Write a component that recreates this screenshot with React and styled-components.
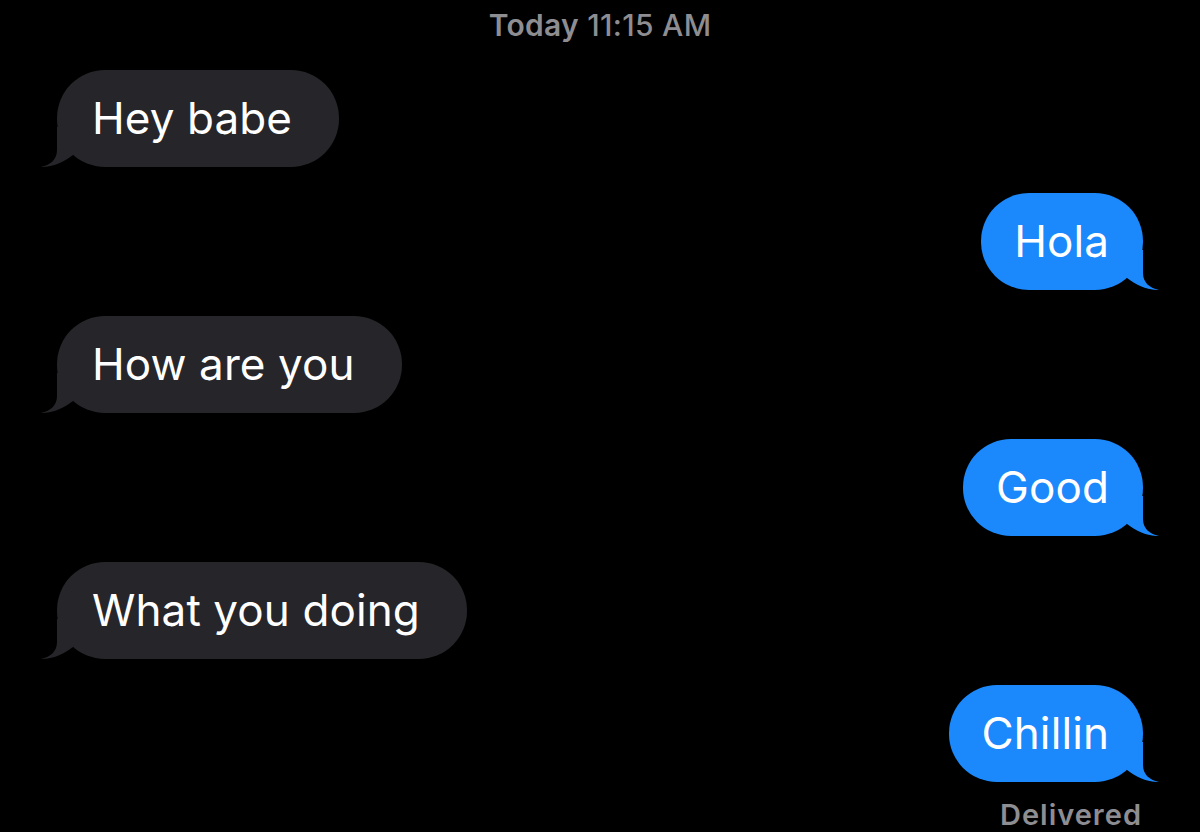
import React from 'react';
import styled, { createGlobalStyle } from 'styled-components';

const GlobalStyle = createGlobalStyle`
  html, body {
    margin: 0;
    padding: 0;
    background: #000;
  }
  body {
    font-family: Inter, "Noto Sans", "Liberation Sans", sans-serif;
    -webkit-font-smoothing: antialiased;
  }
`;

const Thread = styled.div`
  width: 1200px;
  height: 832px;
  overflow: hidden;
  box-sizing: border-box;
  padding: 0 57px;
  display: flex;
  flex-direction: column;
  background: #000;
`;

const Timestamp = styled.div`
  text-align: center;
  color: #8d8d92;
  font-size: 30px;
  font-weight: 500;
  line-height: 50px;
  margin-bottom: 20px;
  letter-spacing: 0.3px;

  b {
    font-weight: 600;
  }
`;

const Row = styled.div`
  display: flex;
  justify-content: ${(p) => (p.$mine ? 'flex-end' : 'flex-start')};
  & + & {
    margin-top: 26px;
  }
`;

const Bubble = styled.div`
  position: relative;
  height: 97px;
  line-height: 97px;
  padding: ${(p) => (p.$mine ? '0 34px 0 33px' : '0 47px 0 35px')};
  border-radius: 48px;
  font-size: 44px;
  letter-spacing: 0.1px;
  color: #fff;
  white-space: nowrap;
  background: ${(p) => (p.$mine ? '#1b88fc' : '#262529')};
`;

const Tail = styled.svg`
  position: absolute;
  bottom: 0;
  width: 40px;
  height: 40px;
  ${(p) => (p.$mine ? 'right: -16px; transform: scaleX(-1);' : 'left: -16px;')}
`;

const Delivered = styled.div`
  align-self: flex-end;
  margin-top: 18px;
  margin-right: 1px;
  color: #8d8d92;
  font-size: 29px;
  font-weight: 600;
  letter-spacing: 1px;
  line-height: 30px;
`;

const messages = [
  { text: 'Hey babe', mine: false },
  { text: 'Hola', mine: true },
  { text: 'How are you', mine: false },
  { text: 'Good', mine: true },
  { text: 'What you doing', mine: false },
  { text: 'Chillin', mine: true },
];

const Message = ({ text, mine }) => {
  const fill = mine ? '#1b88fc' : '#262529';
  return (
    <Row $mine={mine}>
      <Bubble $mine={mine}>
        <Tail $mine={mine} viewBox="0 0 40 40">
          <path
            d="M16 0 L16 23 C16 32 10 38 0 40 C11 40.5 23 35 32 28 L32 0 Z"
            fill={fill}
          />
        </Tail>
        {text}
      </Bubble>
    </Row>
  );
};

export default function App() {
  return (
    <>
      <GlobalStyle />
      <Thread>
        <Timestamp>
          <b>Today</b> 11:15 AM
        </Timestamp>
        {messages.map((m) => (
          <Message key={m.text} text={m.text} mine={m.mine} />
        ))}
        <Delivered>Delivered</Delivered>
      </Thread>
    </>
  );
}
